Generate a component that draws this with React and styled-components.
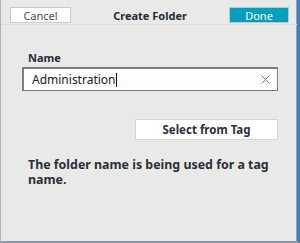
import styled, { createGlobalStyle } from "styled-components";

const Global = createGlobalStyle`
  html, body {
    margin: 0;
    padding: 0;
    background: #e9eae7;
  }
  * { box-sizing: border-box; }
`;

function ClearIcon() {
  return (
    <svg width="9" height="9" viewBox="0 0 9 9" fill="none">
      <path d="M0.5 0.5 L8.5 8.5 M8.5 0.5 L0.5 8.5" stroke="#7c7f80" strokeWidth="1" />
    </svg>
  );
}

function App() {
  return (
    <>
      <Global />
      <Panel>
        <Header>
          <HeaderButton>Cancel</HeaderButton>
          <Title>Create Folder</Title>
          <HeaderButton primary>Done</HeaderButton>
        </Header>
        <Body>
          <Label>Name</Label>
          <InputBox>
            <InputText>
              Administration<Caret />
            </InputText>
            <ClearIcon />
          </InputBox>
          <ActionRow>
            <TagButton>Select from Tag</TagButton>
          </ActionRow>
          <Message>The folder name is being used for a tag name.</Message>
        </Body>
      </Panel>
    </>
  );
}

const Panel = styled.div`
  width: 300px;
  height: 243px;
  background: #e9eae7;
  border-left: 1px solid #a9b3bd;
  border-right: 3px solid #3d7fbf;
  border-bottom: 2px solid #8d9aa5;
  box-shadow: inset -1px 0 0 #9aa3a8;
  font-family: "Noto Sans", "Open Sans", sans-serif;
  color: #262b36;
`;

const Header = styled.div`
  height: 25px;
  display: grid;
  grid-template-columns: 61px 1fr 60px;
  align-items: start;
  padding: 7px 8px 0 9px;
  border-bottom: 1px solid #dcdedb;
`;

const HeaderButton = styled.div`
  height: 16px;
  display: flex;
  align-items: center;
  justify-content: center;
  font-size: 11px;
  line-height: 1;
  border: 1px solid ${(p) => (p.primary ? "#bcc7c8" : "#c9cbc8")};
  background: ${(p) => (p.primary ? "#02a0bf" : "#ffffff")};
  color: ${(p) => (p.primary ? "#ffffff" : "#4a4d52")};
`;

const Title = styled.div`
  text-align: center;
  font-size: 11px;
  font-weight: 700;
  line-height: 16px;
  margin-top: 1px;
`;

const Body = styled.div`
  padding: 26px 18px 0 21px;
`;

const Label = styled.div`
  font-size: 11px;
  font-weight: 700;
  line-height: 14px;
  padding-left: 6px;
  margin-bottom: 2px;
`;

const InputBox = styled.div`
  width: 256px;
  height: 24px;
  display: flex;
  align-items: center;
  justify-content: space-between;
  padding: 0 7px 0 8px;
  background: #fdfdfb;
  border: 2px solid #7b7e7c;
  border-right-width: 1px;
  border-bottom-width: 1px;
`;

const InputText = styled.span`
  font-size: 12px;
  color: #1e2125;
  display: flex;
  align-items: center;
`;

const Caret = styled.span`
  display: inline-block;
  width: 1px;
  height: 14px;
  background: #111;
`;

const ActionRow = styled.div`
  display: flex;
  justify-content: flex-end;
  padding: 28px 1px 0 0;
`;

const TagButton = styled.div`
  width: 143px;
  height: 21px;
  display: flex;
  align-items: center;
  justify-content: center;
  background: #ffffff;
  border: 1px solid #d3d5d2;
  font-size: 11.5px;
  font-weight: 700;
  color: #2a2f3a;
`;

const Message = styled.p`
  margin: 17px 0 0 6px;
  width: 252px;
  font-size: 12.4px;
  font-weight: 700;
  line-height: 15px;
  color: #2a2f3a;
`;

export default App;
